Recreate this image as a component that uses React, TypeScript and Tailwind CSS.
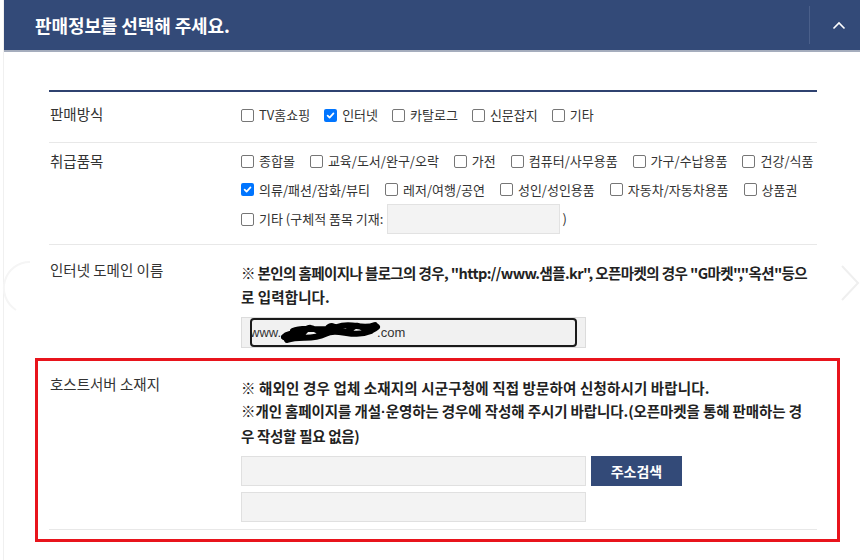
import React from "react";

const FONT = { fontFamily: '"Noto Sans CJK KR", "Noto Sans", "Liberation Sans", sans-serif' };
const LATIN = { fontFamily: '"Liberation Sans", Arial, sans-serif' };

function Box({ checked }: { checked?: boolean }) {
  if (checked) {
    return (
      <span className="w-[13px] h-[13px] rounded-[2px] bg-[#0075ff] flex items-center justify-center shrink-0">
        <svg width="9" height="9" viewBox="0 0 10 10">
          <path d="M1.8 5.2 L4 7.4 L8.3 2.6" fill="none" stroke="#fff" strokeWidth="1.9" strokeLinecap="round" strokeLinejoin="round" />
        </svg>
      </span>
    );
  }
  return <span className="w-[13px] h-[13px] rounded-[2px] border border-[#767676] bg-white shrink-0" />;
}

function Check({ label, checked }: { label: string; checked?: boolean }) {
  return (
    <span className="flex items-center gap-[5px] whitespace-nowrap">
      <Box checked={checked} />
      <span>{label}</span>
    </span>
  );
}

export default function App() {
  return (
    <div className="relative w-[860px] h-[560px] bg-white overflow-hidden pl-[3px]" style={FONT}>
      <div className="h-full border-l border-[#f0f0f0]">
        {/* header */}
        <div className="h-[52px] bg-[#334a78] border-b-2 border-[#a5adbd] flex items-center">
          <h2 className="flex-1 pl-[31px] text-white font-bold text-[18px] tracking-[-0.1px]">판매정보를 선택해 주세요.</h2>
          <div className="w-[51px] h-[38px] border-l border-[#4a5f8a] flex items-center justify-center pl-[8px]">
            <svg width="14" height="9" viewBox="0 0 14 9">
              <path d="M1.5 7.5 L7 2 L12.5 7.5" fill="none" stroke="#fff" strokeWidth="1.6" />
            </svg>
          </div>
        </div>

        {/* form */}
        <div className="ml-[45px] w-[768px] mt-[38px] border-t-2 border-[#2f4270] text-[#333]">
          {/* row 1 */}
          <div className="flex items-start border-b border-[#e8e8e8] h-[51px]">
            <div className="w-[192px] shrink-0 pl-px pt-[12px] leading-[20px] text-[14.5px]">판매방식</div>
            <div className="mt-[13px] h-[20px] text-[13px] flex items-center gap-x-[14px]">
              <Check label="TV홈쇼핑" />
              <Check label="인터넷" checked />
              <Check label="카탈로그" />
              <Check label="신문잡지" />
              <Check label="기타" />
            </div>
          </div>

          {/* row 2 */}
          <div className="flex items-start border-b border-[#e8e8e8] h-[102px]">
            <div className="w-[192px] shrink-0 pl-px pt-[8px] leading-[20px] text-[14.5px]">취급품목</div>
            <div className="pt-[4px] text-[13px] flex flex-col">
              <div className="h-[28px] flex items-center gap-x-[15px]">
                <Check label="종합몰" />
                <Check label="교육/도서/완구/오락" />
                <Check label="가전" />
                <Check label="컴퓨터/사무용품" />
                <Check label="가구/수납용품" />
                <Check label="건강/식품" />
              </div>
              <div className="h-[29px] flex items-center gap-x-[15px]">
                <Check label="의류/패션/잡화/뷰티" checked />
                <Check label="레저/여행/공연" />
                <Check label="성인/성인용품" />
                <Check label="자동차/자동차용품" />
                <Check label="상품권" />
              </div>
              <div className="h-[30px] flex items-center">
                <Check label="기타 (구체적 품목 기재:" />
                <div className="ml-[4px] w-[173px] h-[30px] bg-[#f3f3f3] border border-[#e2e2e2]" />
                <span className="ml-[2px]">)</span>
              </div>
            </div>
          </div>

          {/* row 3 */}
          <div className="flex items-start h-[114px]">
            <div className="w-[192px] shrink-0 pl-px pt-[15px] leading-[20px] text-[14.5px]">인터넷 도메인 이름</div>
            <div className="pt-[16px] flex flex-col">
              <div className="text-[14.5px] leading-[24px] font-semibold text-[#222] whitespace-nowrap">
                <div className="tracking-[-0.6px]">※ 본인의 홈페이지나 블로그의 경우, "http://www.샘플.kr", 오픈마켓의 경우 "G마켓","옥션"등으</div>
                <div className="tracking-[0.1px]">로 입력합니다.</div>
              </div>
              <div className="mt-[8px] w-[345px] h-[31px] bg-[#f1f1f1] border border-[#dcdcdc] px-[8px] flex">
                <div className="flex-1 border-2 border-[#1a1a1a] rounded-[4px] flex items-center text-[13px] text-[#333] overflow-hidden" style={LATIN}>
                  <span className="-ml-[2px]">www.</span>
                  <svg width="100" height="24" viewBox="0 0 100 24" className="shrink-0">
                    <path
                      d="M3 16 C10 8, 16 20, 24 10 S38 18, 46 8 S60 18, 70 8 S84 16, 96 6 M6 19 C20 14, 30 20, 44 13 S70 18, 90 10 M12 10 C24 4, 40 12, 56 6 S80 10, 94 4"
                      fill="none"
                      stroke="#000"
                      strokeWidth="6"
                      strokeLinecap="round"
                    />
                  </svg>
                  <span className="-ml-[4px]">.com</span>
                </div>
              </div>
            </div>
          </div>

          {/* row 4 */}
          <div className="relative flex items-start border-t border-[#e8e8e8] border-b h-[171px]">
            <div className="w-[192px] shrink-0 pl-px pt-[14px] leading-[20px] text-[14.5px]">호스트서버 소재지</div>
            <div className="pt-[16px] flex flex-col">
              <div className="text-[14.5px] leading-[23px] font-semibold text-[#222] whitespace-nowrap">
                <div className="tracking-[0.15px]">※ 해외인 경우 업체 소재지의 시군구청에 직접 방문하여 신청하시기 바랍니다.</div>
                <div className="tracking-[-0.1px]">
                  ※개인 홈페이지를 개설<span style={LATIN}>·</span>운영하는 경우에 작성해 주시기 바랍니다.(오픈마켓을 통해 판매하는 경
                </div>
                <div className="tracking-[-0.3px]">우 작성할 필요 없음)</div>
              </div>
              <div className="mt-[9px] flex items-center gap-[5px]">
                <div className="w-[345px] h-[30px] bg-[#f3f3f3] border border-[#e0e0e0]" />
                <button className="w-[91px] h-[30px] bg-[#334a78] text-white font-bold text-[14px]">주소검색</button>
              </div>
              <div className="mt-[6px] w-[345px] h-[30px] bg-[#f3f3f3] border border-[#e0e0e0]" />
            </div>
            <div className="absolute -left-[14px] -right-[23px] -top-[2px] -bottom-[13px] border-[3px] border-[#e8141c] pointer-events-none" />
          </div>
        </div>
      </div>

      {/* faint carousel ghosts */}
      <svg className="absolute left-0 top-[258px]" width="30" height="56" viewBox="0 0 30 56">
        <path d="M30 4 A26 26 0 0 0 16 52" fill="none" stroke="#f5f5f5" strokeWidth="2" />
      </svg>
      <svg className="absolute left-[840px] top-[264px]" width="20" height="38" viewBox="0 0 20 38">
        <path d="M2 2 L18 19 L2 36" fill="none" stroke="#efefef" strokeWidth="2" />
      </svg>
    </div>
  );
}
